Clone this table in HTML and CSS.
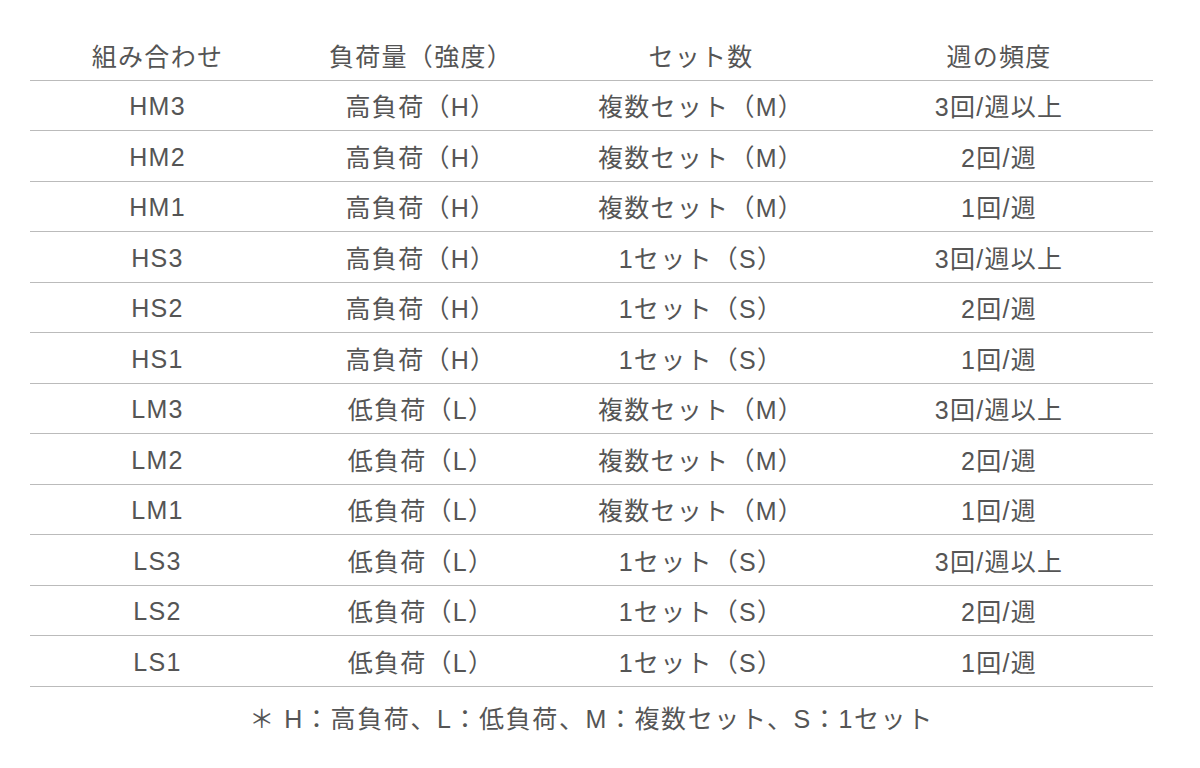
FILE: index.html
```html
<!DOCTYPE html>
<html lang="ja">
<head>
<meta charset="utf-8">
<link rel="stylesheet" href="styles.css">
</head>
<body>
<div class="page">
  <div class="table">
    <div class="row head"><div>組み合わせ</div><div>負荷量（強度）</div><div>セット数</div><div>週の頻度</div></div>
    <div class="row"><div class="code">HM3</div><div>高負荷（H）</div><div>複数セット（M）</div><div>3回/週以上</div></div>
    <div class="row"><div class="code">HM2</div><div>高負荷（H）</div><div>複数セット（M）</div><div>2回/週</div></div>
    <div class="row"><div class="code">HM1</div><div>高負荷（H）</div><div>複数セット（M）</div><div>1回/週</div></div>
    <div class="row"><div class="code">HS3</div><div>高負荷（H）</div><div>1セット（S）</div><div>3回/週以上</div></div>
    <div class="row"><div class="code">HS2</div><div>高負荷（H）</div><div>1セット（S）</div><div>2回/週</div></div>
    <div class="row"><div class="code">HS1</div><div>高負荷（H）</div><div>1セット（S）</div><div>1回/週</div></div>
    <div class="row"><div class="code">LM3</div><div>低負荷（L）</div><div>複数セット（M）</div><div>3回/週以上</div></div>
    <div class="row"><div class="code">LM2</div><div>低負荷（L）</div><div>複数セット（M）</div><div>2回/週</div></div>
    <div class="row"><div class="code">LM1</div><div>低負荷（L）</div><div>複数セット（M）</div><div>1回/週</div></div>
    <div class="row"><div class="code">LS3</div><div>低負荷（L）</div><div>1セット（S）</div><div>3回/週以上</div></div>
    <div class="row"><div class="code">LS2</div><div>低負荷（L）</div><div>1セット（S）</div><div>2回/週</div></div>
    <div class="row"><div class="code">LS1</div><div>低負荷（L）</div><div>1セット（S）</div><div>1回/週</div></div>
  </div>
  <p class="note">＊ H：高負荷、L：低負荷、M：複数セット、S：1セット</p>
</div>
</body>
</html>
```
FILE: styles.css
```css
html, body {
  margin: 0;
  padding: 0;
  background: #fff;
}
body {
  font-family: "Liberation Sans", "Noto Sans CJK JP", sans-serif;
  color: #555;
}
.page {
  padding: 30px 47px 0 30px;
}
.table {
  width: 1123px;
}
.row {
  display: grid;
  grid-template-columns: 255px 272px 288px 308px;
  height: 49.5px;
  border-bottom: 1px solid #bbb;
  font-size: 25px;
  letter-spacing: 1.3px;
}
.row > div {
  display: flex;
  align-items: center;
  justify-content: center;
  white-space: nowrap;
}
.row > .code {
  padding-top: 3px;
}
.note {
  margin: 0;
  padding-top: 12px;
  text-align: center;
  font-size: 25px;
  letter-spacing: 1.6px;
  width: 1123px;
}
```
